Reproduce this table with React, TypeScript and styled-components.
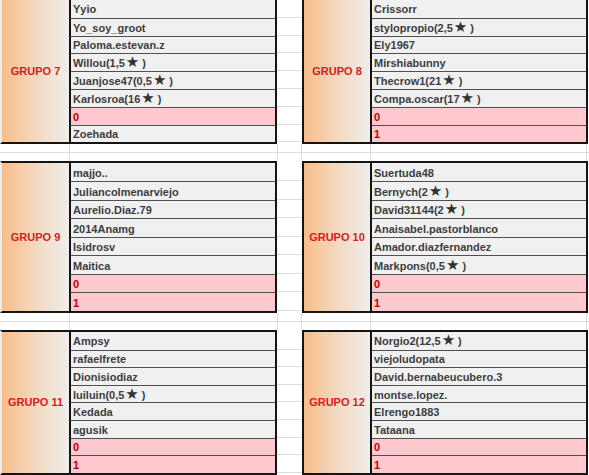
import React from 'react'
import styled, { createGlobalStyle } from 'styled-components'

const GlobalStyle = createGlobalStyle`
  html, body {
    margin: 0;
    padding: 0;
    background: #ffffff;
  }
  body {
    font-family: "Liberation Sans", Arial, sans-serif;
  }
`

type Group = { title: string; names: string[] }

const bands: { rowH: number; left: Group; right: Group }[] = [
    {
        rowH: 17.8,
        left: {
            title: 'GRUPO 7',
            names: ['Yyio', 'Yo_soy_groot', 'Paloma.estevan.z', 'Willou(1,5★)', 'Juanjose47(0,5★)', 'Karlosroa(16★)', '0', 'Zoehada'],
        },
        right: {
            title: 'GRUPO 8',
            names: ['Crissorr', 'stylopropio(2,5★)', 'Ely1967', 'Mirshiabunny', 'Thecrow1(21★)', 'Compa.oscar(17★)', '0', '1'],
        },
    },
    {
        rowH: 18.5,
        left: {
            title: 'GRUPO 9',
            names: ['majjo..', 'Juliancolmenarviejo', 'Aurelio.Diaz.79', '2014Anamg', 'Isidrosv', 'Maitica', '0', '1'],
        },
        right: {
            title: 'GRUPO 10',
            names: ['Suertuda48', 'Bernych(2★)', 'David31144(2★)', 'Anaisabel.pastorblanco', 'Amador.diazfernandez', 'Markpons(0,5★)', '0', '1'],
        },
    },
    {
        rowH: 17.6,
        left: {
            title: 'GRUPO 11',
            names: ['Ampsy', 'rafaelfrete', 'Dionisiodiaz', 'luiluin(0,5★)', 'Kedada', 'agusik', '0', '1'],
        },
        right: {
            title: 'GRUPO 12',
            names: ['Norgio2(12,5★)', 'viejoludopata', 'David.bernabeucubero.3', 'montse.lopez.', 'Elrengo1883', 'Tataana', '0', '1'],
        },
    },
]

const Page = styled.div`
    display: flex;
    flex-direction: column;
    width: 589px;
    margin-top: -2px;
`

const Band = styled.div`
    display: flex;
    align-items: stretch;
`

const Block = styled.div<{ $edge?: boolean }>`
    display: flex;
    border: 2px solid #141414;
    border-left-color: ${props => props.$edge ? '#ececec' : '#141414'};
`

const Label = styled.div<{ $w: number }>`
    width: ${props => props.$w}px;
    border-right: 2px solid #141414;
    background: linear-gradient(to right, #f8bd88 0%, #f4d6bc 45%, #efedeb 100%);
    display: flex;
    align-items: center;
    justify-content: center;
    color: #d81c1c;
    font-size: 11px;
    font-weight: bold;
`

const List = styled.div<{ $w: number }>`
    width: ${props => props.$w}px;
    display: flex;
    flex-direction: column;
`

const Row = styled.div<{ $h: number; $bad?: boolean }>`
    box-sizing: border-box;
    height: ${props => props.$h}px;
    padding: 1px 0 0 2px;
    display: flex;
    align-items: center;
    background: ${props => props.$bad ? '#ffc7ce' : '#f0f0f0'};
    color: ${props => props.$bad ? '#c00000' : '#3d3d3d'};
    font-size: 11px;
    font-weight: bold;
    white-space: pre;
    & + & {
        border-top: 1px solid #505050;
    }
`

const Star = styled.span`
    font-family: "DejaVu Sans", sans-serif;
    font-size: 15px;
    line-height: 1;
    color: #333333;
    margin: -1px 3px 0 1px;
`

const Gutter = styled.div`
    width: 25px;
    display: flex;
    flex-direction: column;
    padding-top: 2px;
`

const GutterCell = styled.div<{ $h: number }>`
    box-sizing: border-box;
    height: ${props => props.$h}px;
    border-bottom: 1px solid #dcdcdc;
`

const Spacer = styled.div<{ $h: number }>`
    height: ${props => props.$h}px;
    display: grid;
    grid-template-columns: 70px 208px 24px 69px 216px 1fr;
    background: linear-gradient(to bottom, transparent calc(50% - 0.5px), #dcdcdc calc(50% - 0.5px), #dcdcdc calc(50% + 0.5px), transparent calc(50% + 0.5px));
`

const SpacerCell = styled.div`
    border-right: 1px solid #dcdcdc;
`

const Name = ({ text }: { text: string }) => {
    const parts = text.split('★')
    if (parts.length === 1) return <>{text}</>
    return (
        <>
            {parts[0]}<Star>★</Star>{parts[1]}
        </>
    )
}

const GroupBlock = ({ group, rowH, edge, labelW, listW }: { group: Group; rowH: number; edge?: boolean; labelW: number; listW: number }) => (
    <Block $edge={edge}>
        <Label $w={labelW}>{group.title}</Label>
        <List $w={listW}>
            {group.names.map((n, i) => (
                <Row key={i} $h={rowH} $bad={n === '0' || n === '1'}>
                    <Name text={n} />
                </Row>
            ))}
        </List>
    </Block>
)

export default function App() {
    return (
        <>
            <GlobalStyle />
            <Page>
                {bands.map((b, i) => (
                    <React.Fragment key={i}>
                        {i > 0 && (
                            <Spacer $h={i === 1 ? 16.6 : 17}>
                                <SpacerCell />
                                <SpacerCell />
                                <SpacerCell />
                                <SpacerCell />
                                <SpacerCell />
                                <div />
                            </Spacer>
                        )}
                        <Band>
                            <GroupBlock group={b.left} rowH={b.rowH} edge labelW={67} listW={204} />
                            <Gutter>
                                {b.left.names.map((_, j) => <GutterCell key={j} $h={b.rowH} />)}
                            </Gutter>
                            <GroupBlock group={b.right} rowH={b.rowH} labelW={66} listW={214} />
                        </Band>
                    </React.Fragment>
                ))}
            </Page>
        </>
    )
}
